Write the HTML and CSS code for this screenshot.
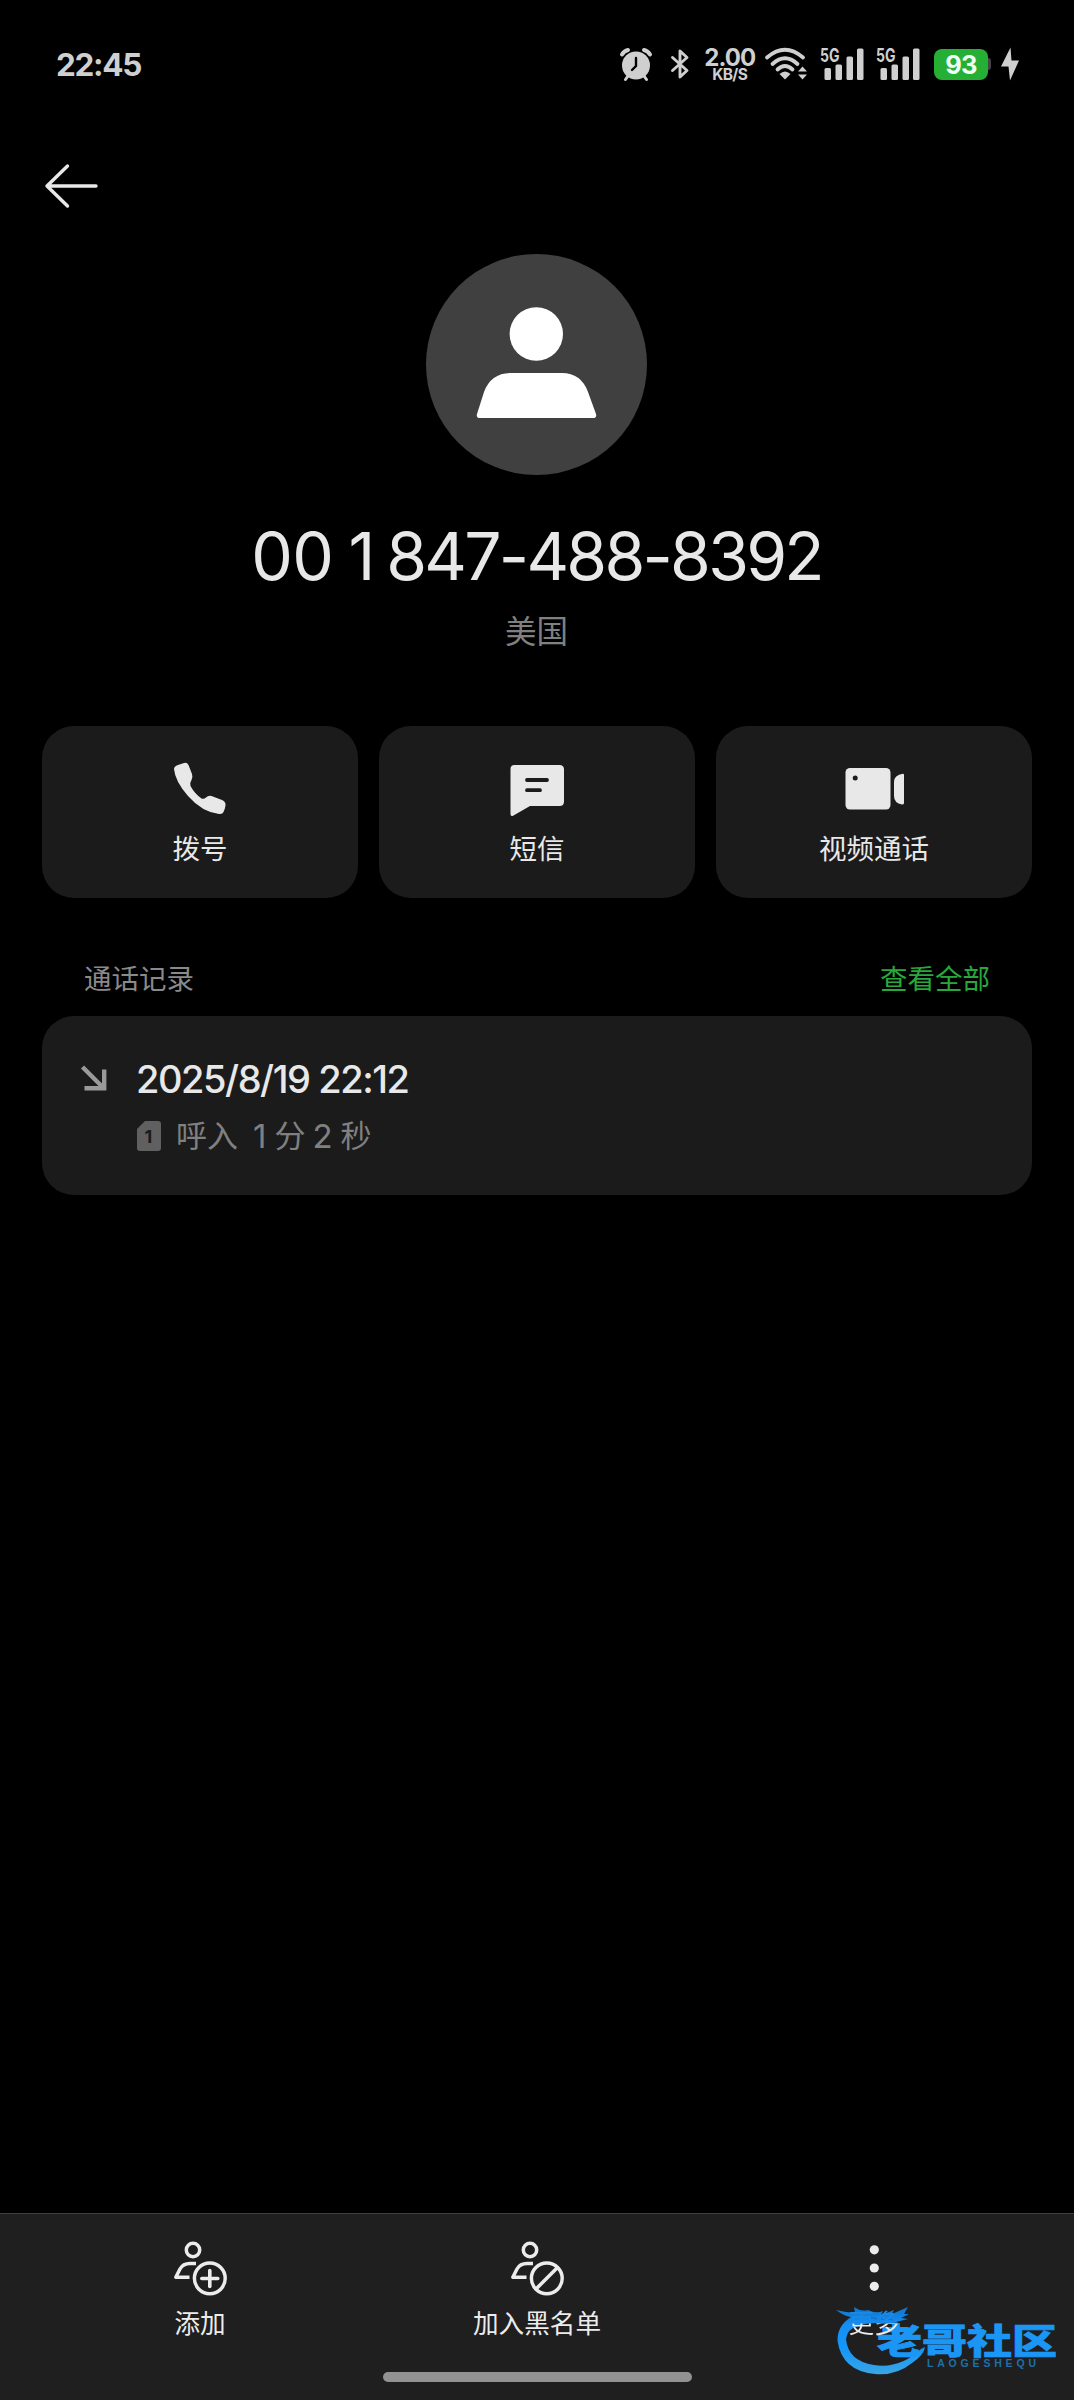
FILE: index.html
```html
<!DOCTYPE html>
<html lang="zh-CN">
<head>
<meta charset="utf-8">
<title>通话详情</title>
<link rel="stylesheet" href="styles.css">
</head>
<body>
<div class="screen">
  <header class="status">
    <span class="clock">22:45</span>
    <div class="status-icons">
      <svg class="alarm" width="34" height="36" viewBox="0 0 34 36">
        <g fill="none" stroke="#cfcfcf" stroke-width="4" stroke-linecap="round"><path d="M3 8.500Q5 5 9 4M25 4Q29 5 31 8.500"/><path d="M9 30l-2.500 3.500M25 30l2.500 3.500" stroke-width="3"/></g>
        <circle cx="17" cy="19.500" r="14" fill="#cfcfcf"/>
        <path d="M17 12v8l-4 4" fill="none" stroke="#000" stroke-width="2.400" stroke-linecap="round"/>
      </svg>
      <svg class="bluetooth" width="20" height="34" viewBox="0 0 20 34"><path d="M2.500 10.500L17 23.500 10 30V4l7 6.500L2.500 23.500" fill="none" stroke="#cfcfcf" stroke-width="2.900" stroke-linejoin="round" stroke-linecap="round"/></svg>
      <div class="speed"><span class="speed-num">2.00</span><span class="speed-unit">KB/S</span></div>
      <svg class="wifi" width="44" height="36" viewBox="0 0 44 36">
        <g fill="none" stroke="#cfcfcf" stroke-width="3.800" stroke-linecap="round"><path d="M3 11.500Q21 -4 39 11.500"/><path d="M8.500 18Q21 6.500 33.500 18"/><path d="M13.500 23.500Q21 16.500 28.500 23.500"/></g>
        <path d="M15.500 28Q21 23 26.500 28L21 33.500Z" fill="#cfcfcf"/>
        <path d="M34 25.500l4.500-5 4.500 5zM34 28.500l4.500 5 4.500-5z" fill="#cfcfcf"/>
      </svg>
      <svg class="signal" width="46" height="36" viewBox="0 0 46 36"><text x="0" y="15.500" textLength="19.500" lengthAdjust="spacingAndGlyphs" class="net">5G</text><g fill="#cfcfcf"><rect x="4.500" y="22" width="6.500" height="12" rx="1.500"/><rect x="15.500" y="18.500" width="6.500" height="15.500" rx="1.500"/><rect x="26.500" y="10.500" width="6.500" height="23.500" rx="1.500"/><rect x="37" y="2.500" width="6.500" height="31.500" rx="1.500"/></g></svg>
      <svg class="signal second" width="46" height="36" viewBox="0 0 46 36"><text x="0" y="15.500" textLength="19.500" lengthAdjust="spacingAndGlyphs" class="net">5G</text><g fill="#cfcfcf"><rect x="4.500" y="22" width="6.500" height="12" rx="1.500"/><rect x="15.500" y="18.500" width="6.500" height="15.500" rx="1.500"/><rect x="26.500" y="10.500" width="6.500" height="23.500" rx="1.500"/><rect x="37" y="2.500" width="6.500" height="31.500" rx="1.500"/></g></svg>
      <span class="battery">93</span><span class="nub"></span>
      <svg class="bolt" width="18" height="34" viewBox="0 0 18 34"><path d="M9.500 .500L0 19.500H7.500L9 33.500L18 13.500H10.500Z" fill="#cfcfcf"/></svg>
    </div>
  </header>

  <nav class="topbar">
    <svg width="56" height="48" viewBox="0 0 56 48"><path d="M53 24H4M24.500 4L4 24L24.500 44" fill="none" stroke="#e8e8e8" stroke-width="3.400" stroke-linecap="round" stroke-linejoin="round"/></svg>
  </nav>

  <section class="profile">
    <svg class="avatar" width="221" height="221" viewBox="0 0 221 221"><circle cx="110.500" cy="110.500" r="110.500" fill="#404040"/><circle cx="110.300" cy="80" r="26.700" fill="#fff"/><path d="M85 119H136Q155 119 162 138L170 160Q171 164 167 164H54Q50 164 51 160L58 138Q65 119 85 119Z" fill="#fff"/></svg>
    <h1 class="number"><span class="country">00</span><span class="one">1</span><span class="local">847-488-8392</span></h1>
    <p class="region">美国</p>
  </section>

  <section class="actions">
    <button class="action">
      <svg width="54" height="60" viewBox="0 0 54 60"><path d="M5 5L11 3Q14 2 15.500 5L19 14Q20 17 18.500 20Q16.500 23 17.500 26Q21.500 33.500 28.500 38.500Q31 39.500 33 37.500Q35.500 35 38.500 36L49 40Q53 41.500 52.500 45.500Q52 49 50.500 52Q49.500 54.500 46 54Q29 52 15 36Q2 21 1 9Q1 6.500 5 5Z" fill="#e8e8e8"/></svg>
      <span>拨号</span>
    </button>
    <button class="action">
      <svg width="54" height="60" viewBox="0 0 54 60"><path d="M4.500 5H49.500Q54 5 54 9.500V41.500Q54 46 49.500 46H20L3.500 55.500Q.500 57 .500 54V9Q.500 5 4.500 5Z" fill="#e8e8e8"/><path d="M17 20H37M17 30.200H30" stroke="#1b1b1b" stroke-width="3.800" stroke-linecap="round"/></svg>
      <span>短信</span>
    </button>
    <button class="action">
      <svg width="60" height="60" viewBox="0 0 60 60"><rect x="1.500" y="8" width="45" height="41.500" rx="4.500" fill="#e8e8e8"/><circle cx="11.200" cy="18" r="2.500" fill="#1b1b1b"/><path d="M59 13.800Q60 13.800 60 15V43Q60 44.500 58 44.500Q50 43 50 36V22Q50 15 59 13.800Z" fill="#e8e8e8"/></svg>
      <span>视频通话</span>
    </button>
  </section>

  <section class="history">
    <div class="history-head"><h2>通话记录</h2><a>查看全部</a></div>
    <article class="record">
      <svg class="incoming" width="28" height="28" viewBox="0 0 28 28"><path d="M2.500 3L23 23.500M4.500 24.200H24.200V5.500" fill="none" stroke="#9a9a9a" stroke-width="4.400"/></svg>
      <div class="record-body">
        <time>2025/8/19 22:12</time>
        <div class="meta">
          <svg class="sim" width="24" height="30" viewBox="0 0 24 30"><path d="M8 0H21Q24 0 24 3V27Q24 30 21 30H3Q0 30 0 27V8Z" fill="#606060"/><text x="11.500" y="21.500" text-anchor="middle">1</text></svg>
          <span class="kind">呼入</span><span class="n n1">1</span><span>分</span><span class="n n2">2</span><span>秒</span>
        </div>
      </div>
    </article>
  </section>

  <footer class="bottom">
    <svg class="brand" width="240" height="80" viewBox="0 0 240 80">
      <defs><linearGradient id="blue" gradientUnits="userSpaceOnUse" x1="0" y1="5" x2="0" y2="74"><stop offset="0" stop-color="#1273c8"/><stop offset=".28" stop-color="#148ff5"/><stop offset=".65" stop-color="#1697f8"/><stop offset="1" stop-color="#3ba6e2"/></linearGradient></defs>
      <path d="M2 9Q10 11 21 12L20 6Q27 11 34 9Q42 13 49 10L47 14L60 9L58 13L74 6L70 13H75L67 17L74 18L62 21Q54 24 43 22Q32 22 24 25Q13 28 12 38Q14 60 40 64Q66 68 87 48L91 46Q90 54 78 62Q62 75 41 73Q8 70 3.500 40Q3 25 17 16Q10 15 2 9Z" fill="url(#blue)"/>
      <path d="M47 18l12 1M31 15l12 3" fill="none" stroke="#126bb5"/>
      <g transform="translate(43 52.500) scale(1 .92)"><text class="brand-cn" textLength="180" lengthAdjust="spacingAndGlyphs">老哥社区</text></g>
      <text class="brand-en" x="93" y="65.500" textLength="109">LAOGESHEQU</text>
    </svg>
    <div class="tools">
      <div class="tool">
        <svg width="54" height="56" viewBox="0 0 54 56" fill="none" stroke="#ececec" stroke-width="3.500" stroke-linejoin="round"><circle cx="20" cy="10" r="6.700"/><path d="M23 23.500H17Q10 23.500 7 29L2.800 37.200H16.500"/><circle cx="36.800" cy="38.300" r="15.400"/><path d="M36.800 30.500V46.500M28.800 38.500H44.800" stroke-linecap="round" stroke-width="3.600"/></svg>
        <span>添加</span>
      </div>
      <div class="tool">
        <svg width="54" height="56" viewBox="0 0 54 56" fill="none" stroke="#ececec" stroke-width="3.500" stroke-linejoin="round"><circle cx="20" cy="10" r="6.700"/><path d="M23 23.500H17Q10 23.500 7 29L2.800 37.200H16.500"/><circle cx="36.800" cy="38.300" r="15.400"/><path d="M26 49L47.500 27.500"/></svg>
        <span>加入黑名单</span>
      </div>
      <div class="tool">
        <svg width="54" height="56" viewBox="0 0 54 56" fill="#ececec"><circle cx="27.300" cy="9.800" r="4.600"/><circle cx="27.300" cy="28" r="4.600"/><circle cx="27.300" cy="46.300" r="4.600"/></svg>
        <span class="more">更多</span>
      </div>
    </div>
    <div class="home"></div>
  </footer>
</div>
</body>
</html>
```
FILE: styles.css
```css
* { box-sizing: border-box; }
html, body { margin: 0; background: #000; }
body { font-family: Inter, "Noto Sans CJK SC", sans-serif; color: #e8e8e8; }
svg { display: block; flex: none; overflow: visible; }
h1, h2, p { margin: 0; font-weight: 400; }
.screen { width: 1074px; height: 2400px; display: flex; flex-direction: column; background: #000; overflow: hidden; }

.status { height: 128px; padding: 0 55px 0 56px; display: flex; align-items: center; justify-content: space-between; color: #cfcfcf; }
.clock { font-size: 31.500px; font-weight: 650; letter-spacing: -1.300px; }
.status-icons { display: flex; align-items: center; }
.bluetooth { margin-left: 17px; }
.speed { width: 50px; margin-left: 15px; display: flex; flex-direction: column; align-items: center; }
.speed-num { font-size: 24px; line-height: 20px; font-weight: 700; letter-spacing: -1px; }
.speed-unit { font-size: 15.500px; line-height: 13px; font-weight: 700; letter-spacing: -0.700px; }
.wifi { margin-left: 9px; }
.signal { margin-left: 12px; }
.signal.second { margin-left: 10.300px; }
.net { font: 700 18.500px Inter, sans-serif; fill: #cfcfcf; }
.battery { width: 54px; height: 31px; margin-left: 12px; border-radius: 8px; background: #25b035; color: #f2fff2; font-size: 25.500px; font-weight: 700; line-height: 31px; text-align: center; letter-spacing: -0.800px; }
.nub { width: 3px; height: 12px; border-radius: 0 3px 3px 0; background: #444; }
.bolt { margin-left: 10px; }

.topbar { height: 117px; padding: 34px 43px 0; }
.profile { display: flex; flex-direction: column; align-items: center; padding: 9px 1px 0 0; height: 481px; }
.number { display: flex; margin-top: 41px; font-size: 66px; line-height: 80px; white-space: nowrap; }
.country { margin-right: 15px; letter-spacing: -0.500px; }
.one { margin-right: 11px; }
.local { letter-spacing: -2.750px; }
.region { margin-top: 14px; font-size: 31.500px; line-height: 44px; color: #808080; }

.actions { display: grid; grid-template-columns: repeat(3, 1fr); gap: 21px; padding: 0 42px; }
.action { height: 172px; padding: 34px 0 0; border: 0; border-radius: 32px; background: #1b1b1b; color: #e8e8e8; font: 400 27.500px/40px "Noto Sans CJK SC", sans-serif; display: flex; flex-direction: column; align-items: center; gap: 7px; }

.history { padding: 51px 42px 0; flex: 1; }
.history-head { height: 67px; padding: 8px 42px 0; display: flex; justify-content: space-between; font: 400 27.500px/40px "Noto Sans CJK SC", sans-serif; }
.history-head h2 { font-size: inherit; color: #8a8a8a; }
.history-head a { color: #28a83c; }
.record { height: 179px; padding: 40px 38px; border-radius: 32px; background: #1b1b1b; display: flex; }
.incoming { margin: 8px 28px 0 0; }
.record-body { display: flex; flex-direction: column; }
time { font-size: 38px; line-height: 46px; font-weight: 500; letter-spacing: -1.450px; white-space: nowrap; }
.meta { display: flex; align-items: center; height: 44px; margin: 12px 0 0 1px; font: 400 31px/44px Inter, "Noto Sans CJK SC", sans-serif; color: #808080; }
.sim { margin-right: 15px; }
.sim text { font: 700 18px Inter, sans-serif; fill: #1b1b1b; }
.n { font-size: 33px; }
.n1 { margin: 0 8px 0 15px; }
.n2 { margin: 0 8px 0 7px; }

.bottom { position: relative; height: 187px; border-top: 1px solid #404040; background: #1f1f1f; display: flex; flex-direction: column; align-items: center; }
.tools { position: relative; width: 1011px; display: grid; grid-template-columns: repeat(3, 1fr); padding-top: 26px; height: 158px; }
.tool { display: flex; flex-direction: column; align-items: center; gap: 6px; font: 400 25.600px/40px "Noto Sans CJK SC", sans-serif; color: #ececec; }
/* the upper half of this label is tinted where the brand mark crosses it */
.more { color: transparent; background: linear-gradient(#1a8ae8 52%, #ececec 56%); -webkit-background-clip: text; background-clip: text; }
.home { width: 309px; height: 10px; border-radius: 5px; background: #929292; }
.brand { position: absolute; left: 834px; top: 87px; }
.brand-cn { font: 900 38px "Noto Sans CJK SC", sans-serif; fill: #1b96f5; stroke: #1b96f5; stroke-width: 0.800px; }
.brand-en { font: 700 10.500px "Liberation Sans", sans-serif; fill: #1e70a8; }
```
